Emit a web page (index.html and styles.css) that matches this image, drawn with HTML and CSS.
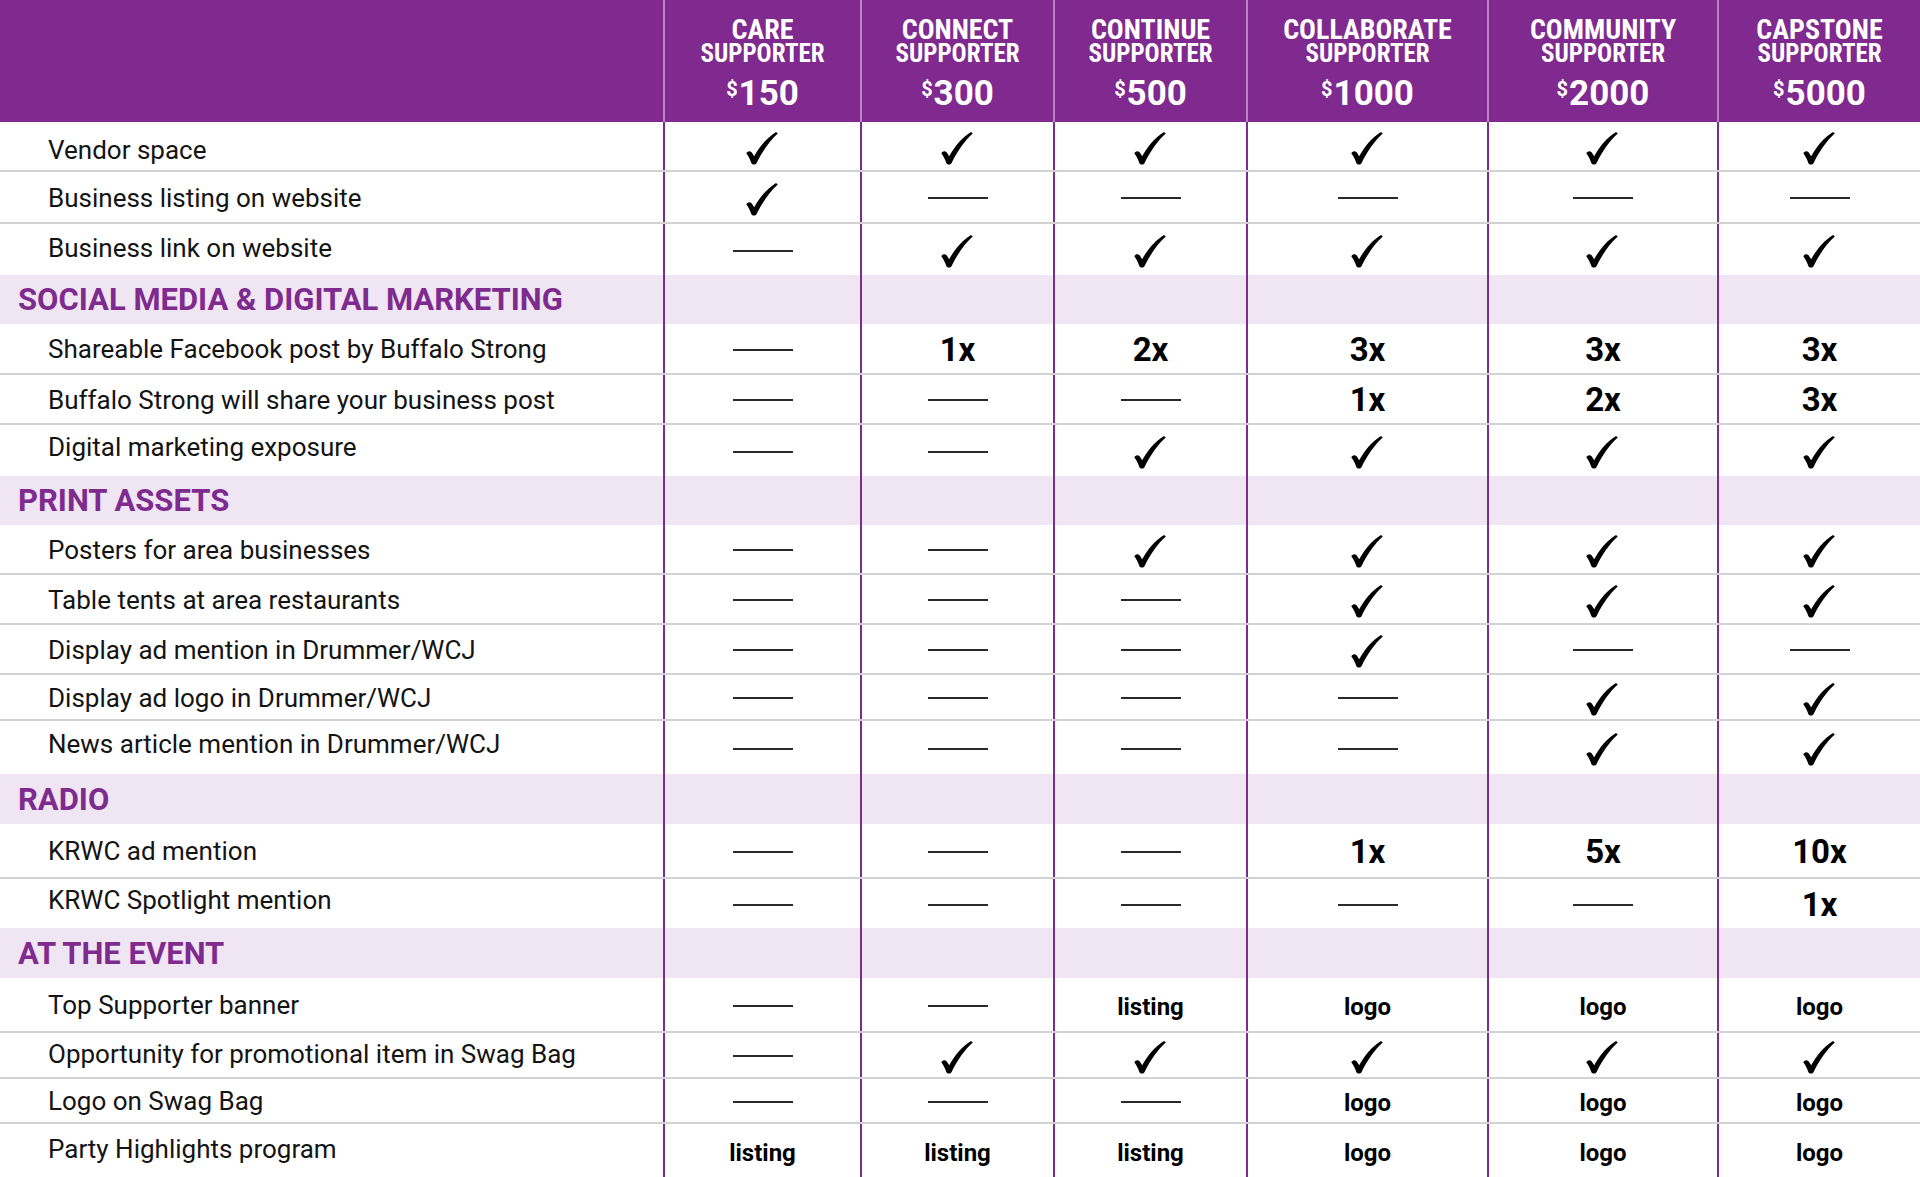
FILE: index.html
```html
<!DOCTYPE html>
<html lang="en">
<head>
<meta charset="utf-8">
<title>Buffalo Strong Supporter Levels</title>
<link rel="stylesheet" href="styles.css">
</head>
<body>
<svg class="defs" width="0" height="0" aria-hidden="true">
  <symbol id="chk" viewBox="0 0 32 33">
    <path d="M30 0 L31.8 1.6 C24 8.5 16.5 19 10.6 31 C9.6 33 6.4 33.2 5.4 31.2 C4.2 27.6 2.4 24.2 0.4 21.6 C0.8 19.4 3.6 18.4 5.6 20.2 L8.2 24.2 C13.4 14.6 21 5.6 30 0 Z"/>
  </symbol>
</svg>
<div class="table">
  <div class="row head">
    <div class="cell label"></div>
    <div class="cell hcol"><span class="tier">CARE</span><span class="sup">SUPPORTER</span><span class="price"><span class="cur">$</span>150</span></div>
    <div class="cell hcol"><span class="tier">CONNECT</span><span class="sup">SUPPORTER</span><span class="price"><span class="cur">$</span>300</span></div>
    <div class="cell hcol"><span class="tier">CONTINUE</span><span class="sup">SUPPORTER</span><span class="price"><span class="cur">$</span>500</span></div>
    <div class="cell hcol"><span class="tier">COLLABORATE</span><span class="sup">SUPPORTER</span><span class="price"><span class="cur">$</span>1000</span></div>
    <div class="cell hcol"><span class="tier">COMMUNITY</span><span class="sup">SUPPORTER</span><span class="price"><span class="cur">$</span>2000</span></div>
    <div class="cell hcol"><span class="tier">CAPSTONE</span><span class="sup">SUPPORTER</span><span class="price"><span class="cur">$</span>5000</span></div>
  </div>

  <div class="row data h48 low">
    <div class="cell label">Vendor space</div>
    <div class="cell"><svg class="chk"><use href="#chk"/></svg></div>
    <div class="cell"><svg class="chk"><use href="#chk"/></svg></div>
    <div class="cell"><svg class="chk"><use href="#chk"/></svg></div>
    <div class="cell"><svg class="chk"><use href="#chk"/></svg></div>
    <div class="cell"><svg class="chk"><use href="#chk"/></svg></div>
    <div class="cell"><svg class="chk"><use href="#chk"/></svg></div>
  </div>
  <div class="row data h52">
    <div class="cell label">Business listing on website</div>
    <div class="cell"><svg class="chk"><use href="#chk"/></svg></div>
    <div class="cell"><span class="dash"></span></div>
    <div class="cell"><span class="dash"></span></div>
    <div class="cell"><span class="dash"></span></div>
    <div class="cell"><span class="dash"></span></div>
    <div class="cell"><span class="dash"></span></div>
  </div>
  <div class="row data h53 high">
    <div class="cell label">Business link on website</div>
    <div class="cell"><span class="dash"></span></div>
    <div class="cell"><svg class="chk"><use href="#chk"/></svg></div>
    <div class="cell"><svg class="chk"><use href="#chk"/></svg></div>
    <div class="cell"><svg class="chk"><use href="#chk"/></svg></div>
    <div class="cell"><svg class="chk"><use href="#chk"/></svg></div>
    <div class="cell"><svg class="chk"><use href="#chk"/></svg></div>
  </div>

  <div class="row section h49">
    <div class="cell label">SOCIAL MEDIA &amp; DIGITAL MARKETING</div>
    <div class="cell"></div><div class="cell"></div><div class="cell"></div><div class="cell"></div><div class="cell"></div><div class="cell"></div>
  </div>
  <div class="row data h49">
    <div class="cell label">Shareable Facebook post by Buffalo Strong</div>
    <div class="cell"><span class="dash"></span></div>
    <div class="cell"><span class="val">1x</span></div>
    <div class="cell"><span class="val">2x</span></div>
    <div class="cell"><span class="val">3x</span></div>
    <div class="cell"><span class="val">3x</span></div>
    <div class="cell"><span class="val">3x</span></div>
  </div>
  <div class="row data h50">
    <div class="cell label">Buffalo Strong will share your business post</div>
    <div class="cell"><span class="dash"></span></div>
    <div class="cell"><span class="dash"></span></div>
    <div class="cell"><span class="dash"></span></div>
    <div class="cell"><span class="val">1x</span></div>
    <div class="cell"><span class="val">2x</span></div>
    <div class="cell"><span class="val">3x</span></div>
  </div>
  <div class="row data h53 higher">
    <div class="cell label">Digital marketing exposure</div>
    <div class="cell"><span class="dash"></span></div>
    <div class="cell"><span class="dash"></span></div>
    <div class="cell"><svg class="chk"><use href="#chk"/></svg></div>
    <div class="cell"><svg class="chk"><use href="#chk"/></svg></div>
    <div class="cell"><svg class="chk"><use href="#chk"/></svg></div>
    <div class="cell"><svg class="chk"><use href="#chk"/></svg></div>
  </div>

  <div class="row section h49">
    <div class="cell label">PRINT ASSETS</div>
    <div class="cell"></div><div class="cell"></div><div class="cell"></div><div class="cell"></div><div class="cell"></div><div class="cell"></div>
  </div>
  <div class="row data h48">
    <div class="cell label">Posters for area businesses</div>
    <div class="cell"><span class="dash"></span></div>
    <div class="cell"><span class="dash"></span></div>
    <div class="cell"><svg class="chk"><use href="#chk"/></svg></div>
    <div class="cell"><svg class="chk"><use href="#chk"/></svg></div>
    <div class="cell"><svg class="chk"><use href="#chk"/></svg></div>
    <div class="cell"><svg class="chk"><use href="#chk"/></svg></div>
  </div>
  <div class="row data h50">
    <div class="cell label">Table tents at area restaurants</div>
    <div class="cell"><span class="dash"></span></div>
    <div class="cell"><span class="dash"></span></div>
    <div class="cell"><span class="dash"></span></div>
    <div class="cell"><svg class="chk"><use href="#chk"/></svg></div>
    <div class="cell"><svg class="chk"><use href="#chk"/></svg></div>
    <div class="cell"><svg class="chk"><use href="#chk"/></svg></div>
  </div>
  <div class="row data h50">
    <div class="cell label">Display ad mention in Drummer/WCJ</div>
    <div class="cell"><span class="dash"></span></div>
    <div class="cell"><span class="dash"></span></div>
    <div class="cell"><span class="dash"></span></div>
    <div class="cell"><svg class="chk"><use href="#chk"/></svg></div>
    <div class="cell"><span class="dash"></span></div>
    <div class="cell"><span class="dash"></span></div>
  </div>
  <div class="row data h46">
    <div class="cell label">Display ad logo in Drummer/WCJ</div>
    <div class="cell"><span class="dash"></span></div>
    <div class="cell"><span class="dash"></span></div>
    <div class="cell"><span class="dash"></span></div>
    <div class="cell"><span class="dash"></span></div>
    <div class="cell"><svg class="chk"><use href="#chk"/></svg></div>
    <div class="cell"><svg class="chk"><use href="#chk"/></svg></div>
  </div>
  <div class="row data h55 higher">
    <div class="cell label">News article mention in Drummer/WCJ</div>
    <div class="cell"><span class="dash"></span></div>
    <div class="cell"><span class="dash"></span></div>
    <div class="cell"><span class="dash"></span></div>
    <div class="cell"><span class="dash"></span></div>
    <div class="cell"><svg class="chk"><use href="#chk"/></svg></div>
    <div class="cell"><svg class="chk"><use href="#chk"/></svg></div>
  </div>

  <div class="row section h50">
    <div class="cell label">RADIO</div>
    <div class="cell"></div><div class="cell"></div><div class="cell"></div><div class="cell"></div><div class="cell"></div><div class="cell"></div>
  </div>
  <div class="row data h53">
    <div class="cell label">KRWC ad mention</div>
    <div class="cell"><span class="dash"></span></div>
    <div class="cell"><span class="dash"></span></div>
    <div class="cell"><span class="dash"></span></div>
    <div class="cell"><span class="val">1x</span></div>
    <div class="cell"><span class="val">5x</span></div>
    <div class="cell"><span class="val">10x</span></div>
  </div>
  <div class="row data h51 higher">
    <div class="cell label">KRWC Spotlight mention</div>
    <div class="cell"><span class="dash"></span></div>
    <div class="cell"><span class="dash"></span></div>
    <div class="cell"><span class="dash"></span></div>
    <div class="cell"><span class="dash"></span></div>
    <div class="cell"><span class="dash"></span></div>
    <div class="cell"><span class="val">1x</span></div>
  </div>

  <div class="row section h50">
    <div class="cell label">AT THE EVENT</div>
    <div class="cell"></div><div class="cell"></div><div class="cell"></div><div class="cell"></div><div class="cell"></div><div class="cell"></div>
  </div>
  <div class="row data h53">
    <div class="cell label">Top Supporter banner</div>
    <div class="cell"><span class="dash"></span></div>
    <div class="cell"><span class="dash"></span></div>
    <div class="cell"><span class="word">listing</span></div>
    <div class="cell"><span class="word">logo</span></div>
    <div class="cell"><span class="word">logo</span></div>
    <div class="cell"><span class="word">logo</span></div>
  </div>
  <div class="row data h46 high">
    <div class="cell label">Opportunity for promotional item in Swag Bag</div>
    <div class="cell"><span class="dash"></span></div>
    <div class="cell"><svg class="chk"><use href="#chk"/></svg></div>
    <div class="cell"><svg class="chk"><use href="#chk"/></svg></div>
    <div class="cell"><svg class="chk"><use href="#chk"/></svg></div>
    <div class="cell"><svg class="chk"><use href="#chk"/></svg></div>
    <div class="cell"><svg class="chk"><use href="#chk"/></svg></div>
  </div>
  <div class="row data h45">
    <div class="cell label">Logo on Swag Bag</div>
    <div class="cell"><span class="dash"></span></div>
    <div class="cell"><span class="dash"></span></div>
    <div class="cell"><span class="dash"></span></div>
    <div class="cell"><span class="word">logo</span></div>
    <div class="cell"><span class="word">logo</span></div>
    <div class="cell"><span class="word">logo</span></div>
  </div>
  <div class="row data h55 high">
    <div class="cell label">Party Highlights program</div>
    <div class="cell"><span class="word">listing</span></div>
    <div class="cell"><span class="word">listing</span></div>
    <div class="cell"><span class="word">listing</span></div>
    <div class="cell"><span class="word">logo</span></div>
    <div class="cell"><span class="word">logo</span></div>
    <div class="cell"><span class="word">logo</span></div>
  </div>
</div>
</body>
</html>
```

FILE: styles.css
```css
* { box-sizing: border-box; }

html, body {
  margin: 0;
  padding: 0;
  background: #ffffff;
}

body {
  font-family: Roboto, "Liberation Sans", sans-serif;
  color: #141414;
}

.defs {
  position: absolute;
  width: 0;
  height: 0;
  overflow: hidden;
}

.table {
  width: 1920px;
  height: 1177px;
  display: flex;
  flex-direction: column;
  overflow: hidden;
}

.row {
  display: grid;
  grid-template-columns: 663px 197px 193px 193px 241px 230px 1fr;
  flex: 0 0 auto;
}

.cell {
  display: flex;
  align-items: center;
  justify-content: center;
  border-left: 2px solid #7c2b8e;
  min-width: 0;
}

.cell.label {
  border-left: none;
  justify-content: flex-start;
}

/* Header */
.row.head {
  height: 122px;
  background: #80298f;
  color: #ffffff;
}

.row.head .cell {
  border-left-color: #b487c4;
}

.hcol {
  flex-direction: column;
  justify-content: flex-start;
  padding-top: 18px;
  font-family: "Roboto Condensed", Roboto, "Liberation Sans", sans-serif;
  font-weight: 700;
}

.tier {
  font-size: 28px;
  line-height: 24px;
  font-stretch: condensed;
}

.sup {
  font-size: 25px;
  line-height: 23px;
  font-stretch: condensed;
}

.price {
  margin-top: 4px;
  font-size: 35px;
  line-height: 40px;
  font-family: Roboto, "Liberation Sans", sans-serif;
  font-weight: 700;
}

.cur {
  font-size: 20px;
  vertical-align: 9px;
  margin-right: 1px;
}

/* Body rows */
.row.data .label {
  padding-left: 48px;
  font-size: 26px;
  font-weight: 400;
  color: #141414;
  padding-top: 1px;
}

.row.data.low .label { padding-top: 8px; }
.row.data.high .label { padding-top: 0; padding-bottom: 3px; }
.row.data.higher .label { padding-top: 0; padding-bottom: 7px; }

.row.data + .row.data {
  border-top: 2px solid #d2d2d2;
}

.row.section {
  background: #f0e6f3;
}

.row.section .label {
  padding-left: 18px;
  font-size: 31px;
  font-weight: 700;
  color: #7e2a8e;
}

.h45 { height: 45px; }
.h46 { height: 46px; }
.h48 { height: 48px; }
.h49 { height: 49px; }
.h50 { height: 50px; }
.h51 { height: 51px; }
.h52 { height: 52px; }
.h53 { height: 53px; }
.h55 { height: 55px; }

.chk {
  width: 32px;
  height: 33px;
  fill: #000000;
  margin-top: 4px;
  margin-right: 2px;
}

.dash {
  display: block;
  width: 60px;
  height: 2px;
  background: #2a2a2a;
  margin-top: 2px;
}

.val {
  font-size: 33px;
  font-weight: 700;
  color: #000000;
  line-height: 1;
  margin-top: 1px;
}

.word {
  font-size: 24px;
  font-weight: 700;
  color: #000000;
  line-height: 1;
  margin-top: 4px;
}
```
